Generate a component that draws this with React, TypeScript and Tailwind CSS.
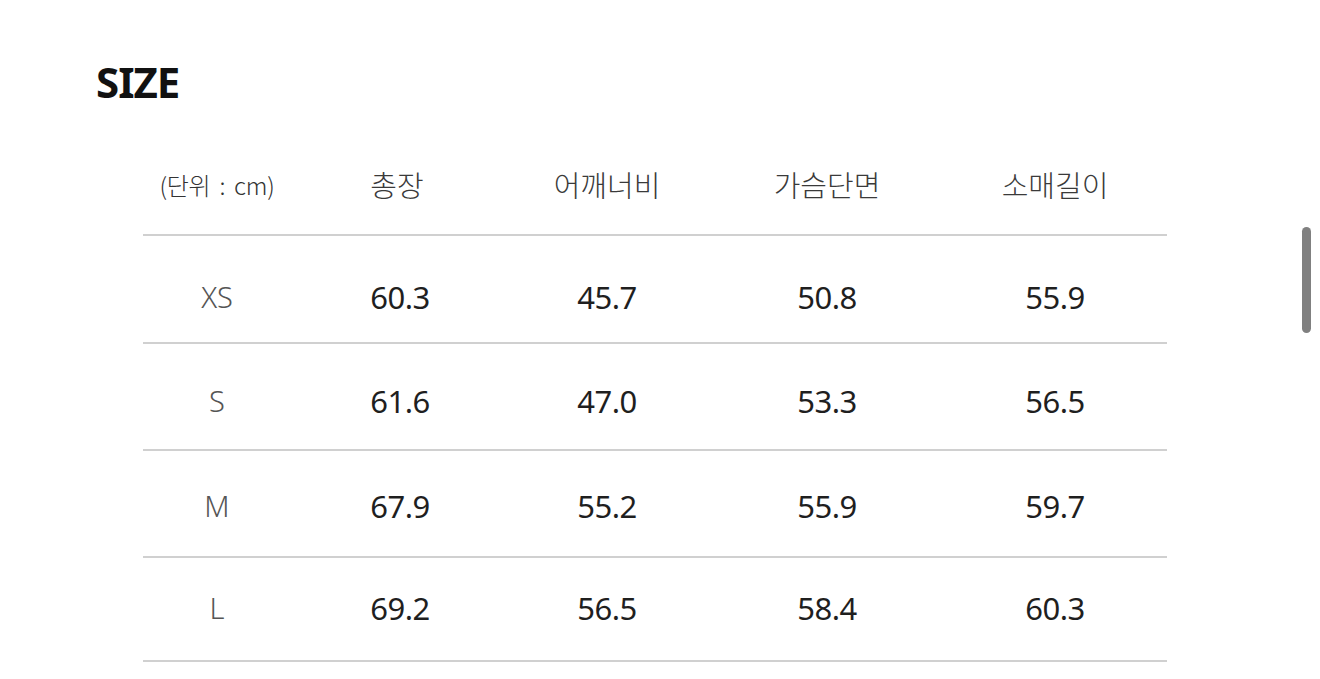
import React from "react";

const rows = [
  { size: "XS", vals: ["60.3", "45.7", "50.8", "55.9"], h: "h-[108px]", pt: "pt-[41px]" },
  { size: "S", vals: ["61.6", "47.0", "53.3", "56.5"], h: "h-[107px]", pt: "pt-[37px]" },
  { size: "M", vals: ["67.9", "55.2", "55.9", "59.7"], h: "h-[107px]", pt: "pt-[35px]" },
  { size: "L", vals: ["69.2", "56.5", "58.4", "60.3"], h: "h-[104px]", pt: "pt-[30px]" },
];

const grid = "grid grid-cols-[148px_212px_208px_232px_224px]";

export default function App() {
  return (
    <div
      className="relative w-[1320px] h-[679px] overflow-hidden bg-white"
      style={{ fontFamily: '"Noto Sans", "Noto Sans CJK KR", sans-serif' }}
    >
      <div className="pl-[96px] pt-[61px]">
        <div className="text-[42px] leading-[42px] font-bold text-[#111] tracking-[-1px]">SIZE</div>
        <div className="ml-[47px] mt-[32px] w-[1024px]">
          <div className={`${grid} h-[101px] items-center border-b-2 border-[#d0d0d0] text-[#3a3a3a]`}>
            <div className="text-center text-[24px] font-light text-[#333] tracking-[-0.3px] [word-spacing:4px]" style={{ fontFamily: '"Noto Sans CJK KR", sans-serif' }}>(단위 : cm)</div>
            {["총장", "어깨너비", "가슴단면", "소매길이"].map((t) => (
              <div key={t} className="text-center text-[29px] font-light" style={{ fontFamily: '"Noto Sans CJK KR", sans-serif' }}>
                {t}
              </div>
            ))}
          </div>
          {rows.map((r) => (
            <div key={r.size} className={`${grid} ${r.h} ${r.pt} items-start border-b-2 border-[#d0d0d0]`}>
              <div className="text-center text-[29px] leading-[40px] font-light text-[#555]">{r.size}</div>
              {r.vals.map((v, i) => (
                <div key={i} className={`text-center text-[31px] leading-[40px] text-[#1f1f1f] tracking-[-0.5px] ${i === 0 ? "pl-[6px]" : ""}`}>
                  {v}
                </div>
              ))}
            </div>
          ))}
        </div>
      </div>
      <div className="absolute left-[1302px] top-[227px] w-[9px] h-[106px] rounded-full bg-[#808080]" />
    </div>
  );
}
